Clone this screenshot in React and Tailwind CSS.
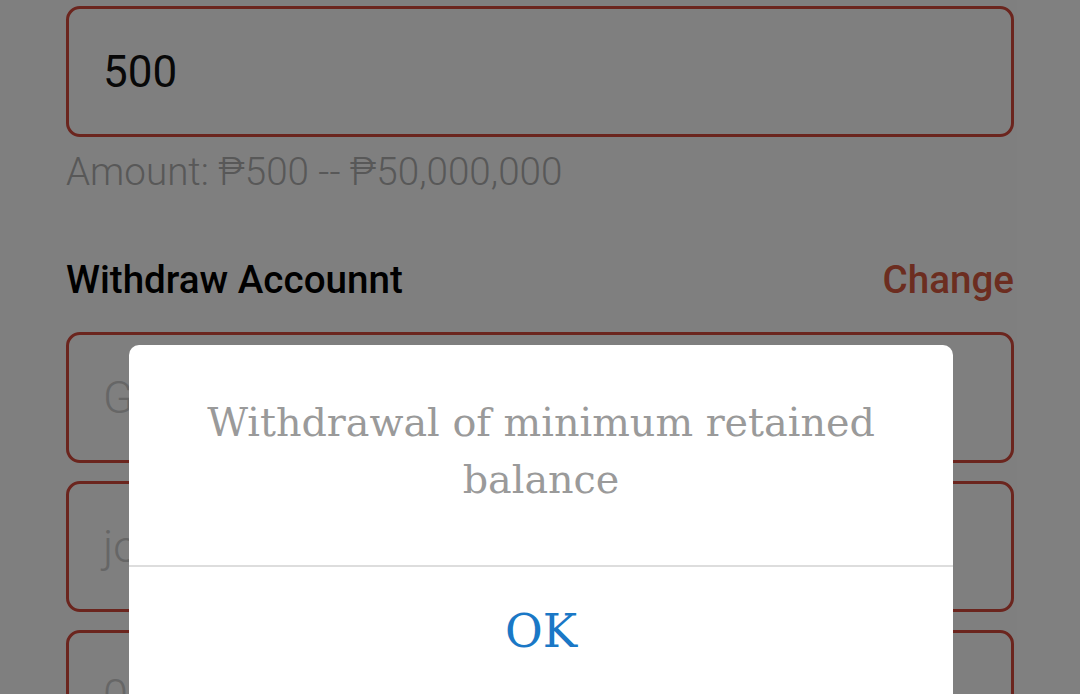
export default function App() {
  const field = "h-[131px] border-[3px] border-[#d64a3c] rounded-[14px] px-[34px] flex items-center";
  return (
    <div className="relative w-[1080px] h-[694px] overflow-hidden bg-white" style={{ fontFamily: "Roboto, 'Liberation Sans', sans-serif" }}>
      <div className="px-[66px] pt-[6px] flex flex-col">
        <div className={field}>
          <span className="text-[44px] text-[#111]">500</span>
        </div>
        <div className="mt-[10px] text-[38.6px] font-light text-[#b0b0b0] leading-[50px]">Amount: ₱500 -- ₱50,000,000</div>
        <div className="mt-[58px] flex items-center justify-between leading-[50px]">
          <span className="text-[38.6px] font-medium text-black">Withdraw Accounnt</span>
          <span className="text-[38.6px] font-medium text-[#d85a40]">Change</span>
        </div>
        <div className="mt-[27px] flex flex-col gap-[18px]">
          <div className={field}><span className="text-[45px] font-light text-[#cccccc]">GCash</span></div>
          <div className={field}><span className="text-[45px] font-light text-[#cccccc]">john doe</span></div>
          <div className={field}><span className="text-[45px] font-light text-[#cccccc]">09123456789</span></div>
        </div>
      </div>
      <div className="absolute inset-0 bg-black/50"></div>
      <div className="absolute left-[129px] top-[345px] w-[824px] h-[400px] bg-white rounded-[10px] flex flex-col" style={{ fontFamily: "'DejaVu Serif', 'Liberation Serif', serif" }}>
        <div className="h-[220px] flex items-center justify-center px-[40px] pb-[8px]">
          <p className="text-center text-[#9a9a9a] text-[39.7px] leading-[57px]">Withdrawal of minimum retained balance</p>
        </div>
        <div className="h-[2px] bg-[#dddddd]"></div>
        <div className="h-[128px] flex items-center justify-center">
          <span className="text-[#1a78c6] text-[46px]">OK</span>
        </div>
      </div>
    </div>
  );
}
